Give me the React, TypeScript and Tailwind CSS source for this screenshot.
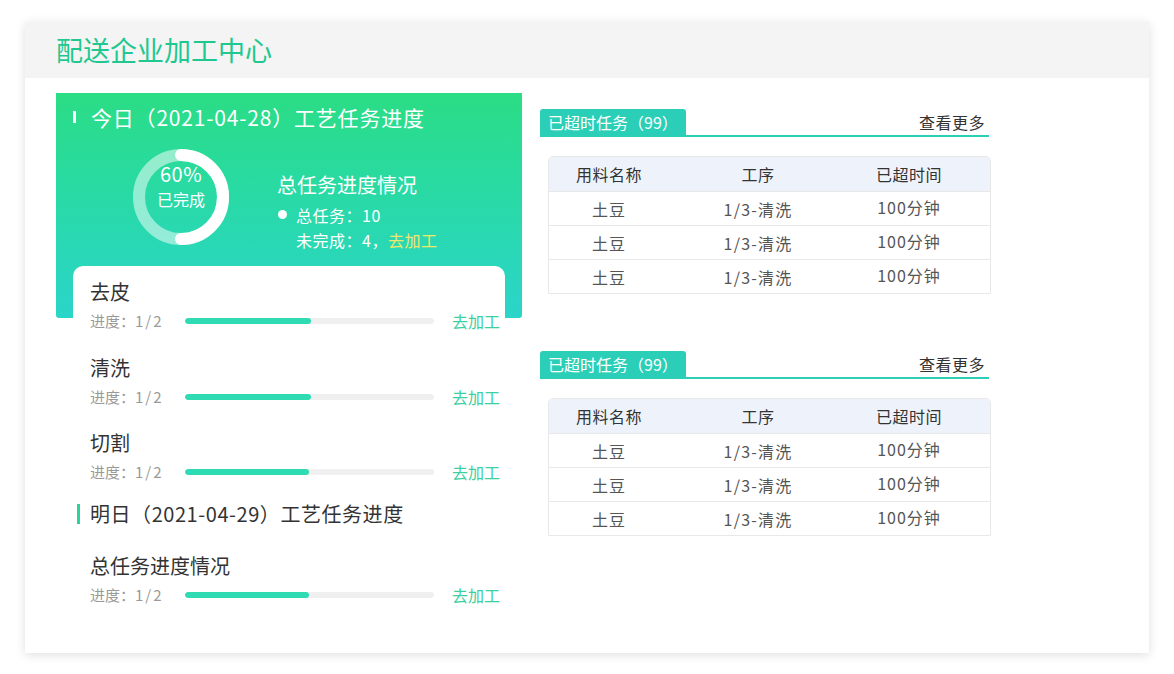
import React from "react";

function ProgressRow({ fill }: { fill: number }) {
  return (
    <div className="flex items-center h-[20px] mt-[7px]">
      <span className="w-[95px] text-[15px] leading-[20px] text-[#9a9a9a]">
        进度：<span className="tracking-[2px]">1/2</span>
      </span>
      <div className="w-[249px] h-[6px] bg-[#f0f0f0] rounded-[3px] overflow-hidden">
        <div className="h-full bg-[#2edbb2] rounded-[3px]" style={{ width: fill }} />
      </div>
      <span className="ml-[18px] text-[16px] leading-[20px] text-[#3ccf9f]">去加工</span>
    </div>
  );
}

function Item({ title, fill, mt }: { title: string; fill: number; mt: string }) {
  return (
    <div className={mt}>
      <div className="text-[20px] leading-[24px] text-[#333]">{title}</div>
      <ProgressRow fill={fill} />
    </div>
  );
}

function TaskTable() {
  const rows = [0, 1, 2];
  return (
    <div>
      <div className="flex items-end justify-between w-[449px] border-b-2 border-[#2bcfb8]">
        <div className="h-[26px] px-[8px] bg-[#2bcfb8] rounded-t-[3px] text-white text-[16px] leading-[26px]">
          已超时任务（99）
        </div>
        <div className="pr-[4px] text-[16px] leading-[26px] text-[#333] tracking-[0.5px]">查看更多</div>
      </div>
      <div className="mt-[19px] ml-[8px] w-[443px] border border-[#e8e8e8] rounded-t-[5px] overflow-hidden">
        <div className="grid grid-cols-[120px_178px_1fr] h-[34px] bg-[#eef3fb] items-center text-[16px] text-[#333] tracking-[0.5px]">
          <div className="text-center">用料名称</div>
          <div className="text-center">工序</div>
          <div className="text-center pr-[19px]">已超时间</div>
        </div>
        {rows.map((r) => (
          <div
            key={r}
            className="grid grid-cols-[120px_178px_1fr] h-[34px] items-center border-t border-[#e8e8e8] text-[16px] text-[#555]"
          >
            <div className="text-center tracking-[1px]">土豆</div>
            <div className="text-center tracking-[1.2px]">1/3-清洗</div>
            <div className="text-center pr-[19px] -mt-[3px] tracking-[1px]">100分钟</div>
          </div>
        ))}
      </div>
    </div>
  );
}

export default function App() {
  return (
    <div className="min-h-[674px] bg-white pt-[22px] pl-[25px] font-['Noto_Sans_CJK_SC','Noto_Sans',sans-serif]">
      <div className="w-[1124px] h-[631px] bg-white shadow-[0_2px_10px_rgba(0,0,0,0.13)]">
        <div className="h-[56px] bg-[#f4f4f4] pl-[31px] flex items-center">
          <span className="text-[27px] leading-[32px] text-[#1ec88e]">配送企业加工中心</span>
        </div>
        <div className="flex pt-[15px] pl-[31px]">
          {/* Left column */}
          <div className="w-[466px]">
            <div className="h-[225px] bg-gradient-to-b from-[#2bdd84] to-[#2bd5c9] rounded-b-[3px]">
              <div className="flex items-center pt-[11px] pl-[17px]">
                <div className="w-[3px] h-[12px] bg-white" />
                <span className="ml-[15px] text-[21px] leading-[26px] text-white tracking-[0.8px]">
                  今日（2021-04-28）工艺任务进度
                </span>
              </div>
              <div className="flex mt-[17px] ml-[75px]">
                <div className="relative w-[100px] h-[100px]">
                  <svg width="100" height="100" viewBox="0 0 100 100">
                    <circle cx="50" cy="50" r="42" fill="none" stroke="rgba(255,255,255,0.5)" strokeWidth="12" />
                    <path d="M 50 8 A 42 42 0 0 1 50 92" fill="none" stroke="#fff" strokeWidth="12" strokeLinecap="round" />
                  </svg>
                  <div className="absolute inset-0 flex flex-col items-center pt-[15px] text-white">
                    <span className="text-[20px] leading-[24px] tracking-[0.5px]">60%</span>
                    <span className="text-[16px] leading-[22px] mt-[2px]">已完成</span>
                  </div>
                </div>
                <div className="ml-[46px] pt-[25px] text-white">
                  <div className="text-[20px] leading-[26px]">总任务进度情况</div>
                  <div className="flex items-center mt-[4px] h-[25px]">
                    <div className="w-[9px] h-[9px] rounded-full bg-white ml-[1px]" />
                    <span className="ml-[9px] text-[16px] tracking-[0.5px]">总任务：10</span>
                  </div>
                  <div className="ml-[19px] h-[25px] flex items-center text-[16px] tracking-[0.5px]">
                    <span>未完成：4，</span>
                    <span className="text-[#eee86b]">去加工</span>
                  </div>
                </div>
              </div>
            </div>
            <div className="-mt-[52px] mx-[17px] bg-white rounded-t-[10px] pl-[17px] pt-[14px]">
              <Item title="去皮" fill={126} mt="" />
              <Item title="清洗" fill={126} mt="mt-[25px]" />
              <Item title="切割" fill={124} mt="mt-[24px]" />
              <div className="flex items-center mt-[18px] -ml-[13px] h-[28px]">
                <div className="w-[3px] h-[20px] bg-[#2bd59a]" />
                <span className="ml-[10px] text-[20px] leading-[28px] text-[#333] tracking-[0.55px]">
                  明日（2021-04-29）工艺任务进度
                </span>
              </div>
              <Item title="总任务进度情况" fill={124} mt="mt-[26px]" />
            </div>
          </div>
          {/* Right column */}
          <div className="ml-[18px] pt-[16px]">
            <TaskTable />
            <div className="mt-[57px]">
              <TaskTable />
            </div>
          </div>
        </div>
      </div>
    </div>
  );
}
